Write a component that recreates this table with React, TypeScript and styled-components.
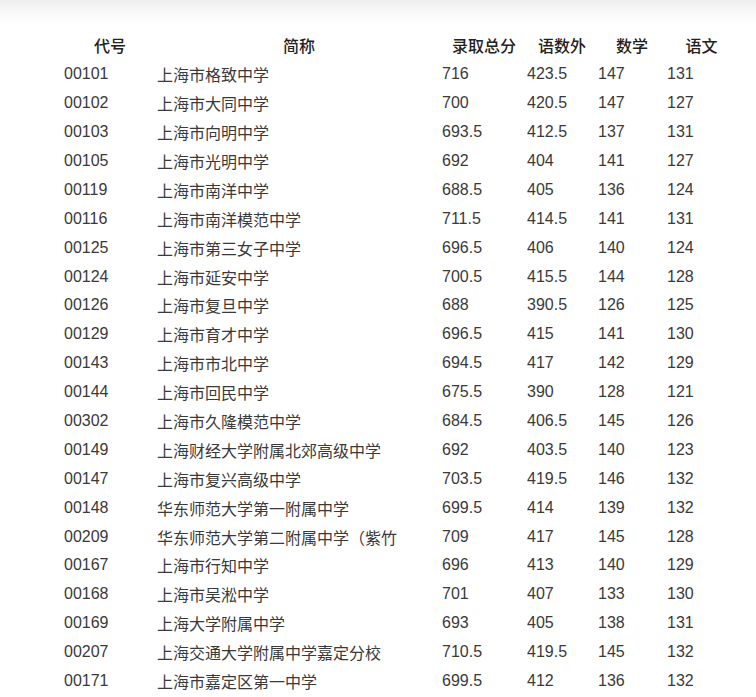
import React from "react";
import styled, { createGlobalStyle } from "styled-components";

const GlobalStyle = createGlobalStyle`
  html, body {
    margin: 0;
    padding: 0;
    background: #fff;
  }
  body {
    font-family: "Liberation Sans", "Noto Sans CJK SC", sans-serif;
  }
`;

const Page = styled.div`
  width: 756px;
  height: 697px;
  overflow: hidden;
  background: #fff;
`;

const TopBand = styled.div`
  height: 31px;
  background: linear-gradient(#efefef 0px, #f8f8f8 12px, #ffffff 24px);
`;

const Table = styled.div`
  display: grid;
  grid-template-columns: 93px 285px 85px 71px 69px 70px;
  grid-auto-rows: 28.9px;
  margin-left: 58px;
`;

const HeadCell = styled.div`
  display: flex;
  align-items: center;
  justify-content: center;
  padding-left: 11px;
  font-size: 16px;
  font-weight: 500;
  color: #222;
`;

const Cell = styled.div`
  display: flex;
  align-items: center;
  padding-left: 6px;
  font-size: 16px;
  color: #3a3a3a;
  white-space: nowrap;
  overflow: hidden;
`;

const rows: [string, string, string, string, string, string][] = [
  ["00101", "上海市格致中学", "716", "423.5", "147", "131"],
  ["00102", "上海市大同中学", "700", "420.5", "147", "127"],
  ["00103", "上海市向明中学", "693.5", "412.5", "137", "131"],
  ["00105", "上海市光明中学", "692", "404", "141", "127"],
  ["00119", "上海市南洋中学", "688.5", "405", "136", "124"],
  ["00116", "上海市南洋模范中学", "711.5", "414.5", "141", "131"],
  ["00125", "上海市第三女子中学", "696.5", "406", "140", "124"],
  ["00124", "上海市延安中学", "700.5", "415.5", "144", "128"],
  ["00126", "上海市复旦中学", "688", "390.5", "126", "125"],
  ["00129", "上海市育才中学", "696.5", "415", "141", "130"],
  ["00143", "上海市市北中学", "694.5", "417", "142", "129"],
  ["00144", "上海市回民中学", "675.5", "390", "128", "121"],
  ["00302", "上海市久隆模范中学", "684.5", "406.5", "145", "126"],
  ["00149", "上海财经大学附属北郊高级中学", "692", "403.5", "140", "123"],
  ["00147", "上海市复兴高级中学", "703.5", "419.5", "146", "132"],
  ["00148", "华东师范大学第一附属中学", "699.5", "414", "139", "132"],
  ["00209", "华东师范大学第二附属中学（紫竹", "709", "417", "145", "128"],
  ["00167", "上海市行知中学", "696", "413", "140", "129"],
  ["00168", "上海市吴淞中学", "701", "407", "133", "130"],
  ["00169", "上海大学附属中学", "693", "405", "138", "131"],
  ["00207", "上海交通大学附属中学嘉定分校", "710.5", "419.5", "145", "132"],
  ["00171", "上海市嘉定区第一中学", "699.5", "412", "136", "132"],
];

const headers = ["代号", "简称", "录取总分", "语数外", "数学", "语文"];

export default function App() {
  return (
    <Page>
      <GlobalStyle />
      <TopBand />
      <Table>
        {headers.map((h) => (
          <HeadCell key={h}>{h}</HeadCell>
        ))}
        {rows.map((r) =>
          r.map((v, i) => <Cell key={r[0] + "-" + i}>{v}</Cell>)
        )}
      </Table>
    </Page>
  );
}
